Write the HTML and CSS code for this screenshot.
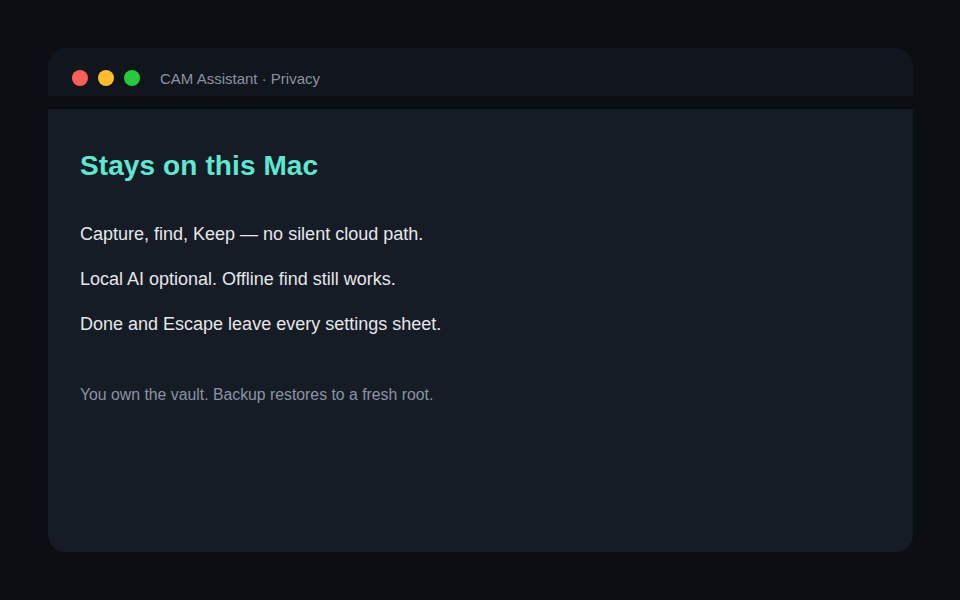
FILE: index.html
```html
<!DOCTYPE html>
<html lang="en">

<head>
    <meta charset="UTF-8">
    <meta name="viewport" content="width=device-width, initial-scale=1.0">
    <title>CAM Assistant · Privacy</title>
    <link rel="stylesheet" href="styles.css">
</head>

<body>

    <div class="window">
        <div class="titlebar">
            <div class="lights">
                <span class="light red"></span>
                <span class="light yellow"></span>
                <span class="light green"></span>
            </div>
            <span class="title">CAM Assistant · Privacy</span>
        </div>

        <div class="content">
            <h1>Stays on this Mac</h1>
            <p class="point">Capture, find, Keep — no silent cloud path.</p>
            <p class="point">Local AI optional. Offline find still works.</p>
            <p class="point">Done and Escape leave every settings sheet.</p>
            <p class="note">You own the vault. Backup restores to a fresh root.</p>
        </div>
    </div>

</body>

</html>
```

FILE: styles.css
```css
body {
    font-family: 'Liberation Sans', Arial, sans-serif;
    background-color: #0b0e13;
    margin: 0;
    padding: 48px 47px 48px 48px;
    height: 600px;
    box-sizing: border-box;
}

.window {
    height: 504px;
    border-radius: 18px;
    overflow: hidden;
    display: flex;
    flex-direction: column;
    gap: 13px;
}

.titlebar {
    height: 48px;
    box-sizing: border-box;
    background-color: #11151c;
    display: flex;
    align-items: center;
    padding: 12px 24px 0;
    gap: 20px;
    flex-shrink: 0;
}

.lights {
    display: flex;
    gap: 10px;
}

.light {
    width: 16px;
    height: 16px;
    border-radius: 50%;
}

.red {
    background-color: #ff5f57;
}

.yellow {
    background-color: #febc2e;
}

.green {
    background-color: #28c840;
}

.title {
    font-size: 15px;
    color: #8b93a3;
}

.content {
    flex: 1;
    background-color: #161c26;
    padding: 41px 32px 40px;
}

h1 {
    margin: 0 0 41px;
    font-size: 28px;
    line-height: 32px;
    font-weight: 700;
    letter-spacing: 0.1px;
    color: #5ee8d2;
}

.point {
    margin: 0 0 23px;
    font-size: 18px;
    line-height: 22px;
    color: #e5e7eb;
}

.note {
    margin: 51px 0 0;
    font-size: 15.8px;
    line-height: 18px;
    color: #8b93a3;
}
```
